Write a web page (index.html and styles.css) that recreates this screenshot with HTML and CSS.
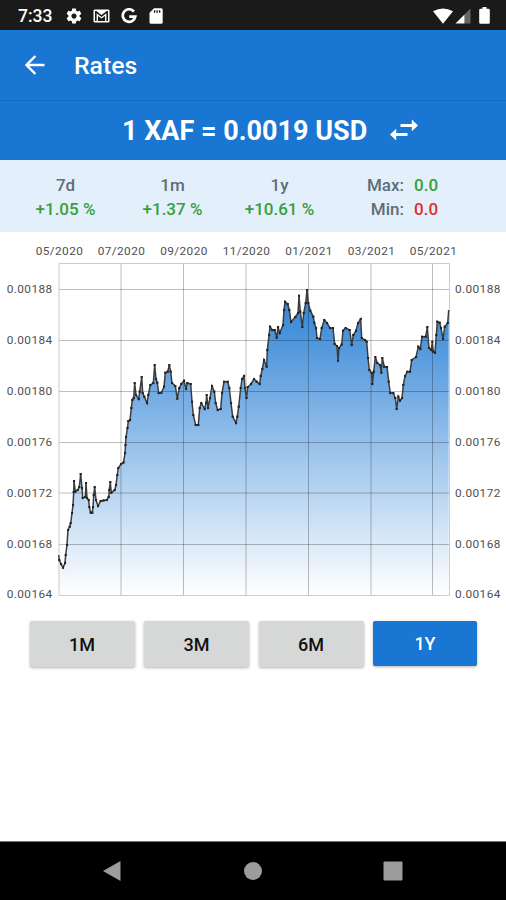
FILE: index.html
```html
<!DOCTYPE html>
<html lang="en">
<head>
<meta charset="UTF-8">
<meta name="viewport" content="width=device-width, initial-scale=1.0">
<title>Rates</title>
<link rel="stylesheet" href="styles.css">
</head>
<body>

  <!-- Status bar -->
  <div class="status-bar">
    <span class="clock">7:33</span>
    <svg class="icon-settings" width="18" height="18" viewBox="0 0 24 24"><path d="M19.43 12.98c.04-.32.07-.64.07-.98s-.03-.66-.07-.98l2.11-1.65c.19-.15.24-.42.12-.64l-2-3.46c-.12-.22-.39-.3-.61-.22l-2.49 1c-.52-.4-1.08-.73-1.69-.98l-.38-2.65C14.46 2.18 14.25 2 14 2h-4c-.25 0-.46.18-.49.42l-.38 2.65c-.61.25-1.17.59-1.69.98l-2.49-1c-.23-.09-.49 0-.61.22l-2 3.46c-.13.22-.07.49.12.64l2.11 1.65c-.04.32-.07.65-.07.98s.03.66.07.98l-2.11 1.65c-.19.15-.24.42-.12.64l2 3.46c.12.22.39.3.61.22l2.49-1c.52.4 1.08.73 1.69.98l.38 2.65c.03.24.24.42.49.42h4c.25 0 .46-.18.49-.42l.38-2.65c.61-.25 1.17-.59 1.69-.98l2.49 1c.23.09.49 0 .61-.22l2-3.46c.12-.22.07-.49-.12-.64l-2.11-1.65zM12 15.5c-1.93 0-3.5-1.57-3.5-3.5s1.57-3.5 3.5-3.5 3.5 1.57 3.5 3.5-1.57 3.5-3.5 3.5z"/></svg>
    <svg class="icon-mail" width="17" height="14" viewBox="0 0 17 14"><path fill-rule="evenodd" d="M1.8.5h13.400q1.300 0 1.300 1.300v10.400q0 1.300-1.300 1.300H1.800Q.5 13.500.5 12.200V1.800Q.5.5 1.800.5zM2 2v10h1.600V4.200l4.900 3.700 4.900-3.700V12H15V2h-1.300L8.500 6 3.300 2zM5 7v5h7V7L8.500 9.600z"/></svg>
    <svg class="icon-google" width="16" height="16" viewBox="0 0 16 16"><path d="M13 3.600A6.300 6.300 0 1 0 14.300 8.600H8.200" fill="none" stroke="#fff" stroke-width="2.700"/></svg>
    <svg class="icon-sd" width="14" height="16" viewBox="0 0 14 16"><path fill-rule="evenodd" d="M5 .3h7.200q1.500 0 1.500 1.500v12.400q0 1.500-1.500 1.500H2q-1.500 0-1.500-1.500V4.800zM4.900 2.300v2.500h1.400V2.300zm2.500 0v2.500h1.400V2.300zm2.500 0v2.500h1.400V2.300z"/></svg>
    <div class="status-right">
      <svg class="icon-wifi" width="20" height="16" viewBox="0 0 20 16"><path d="M0 3.200Q10-2.400 20 3.200L10 15.800z"/></svg>
      <svg class="icon-signal" width="16" height="16" viewBox="0 0 16 16"><path class="signal-off" d="M9.500 6.500 15.500.5v15h-6z"/><path d="M.5 15.500 9.500 6.500v9z"/></svg>
      <svg class="icon-battery" width="11" height="17" viewBox="0 0 11 17"><path d="M3.500 0h4v1.700h2q1.300 0 1.300 1.300v12.500q0 1.300-1.300 1.300h-8Q.2 16.800.2 15.500V3q0-1.300 1.300-1.300h2z"/></svg>
    </div>
  </div>

  <!-- App header -->
  <header class="toolbar">
    <svg class="back" width="20" height="20" viewBox="0 0 20 20"><path d="M19.500 10H1.800M10.400 1 1.500 10l8.900 9" fill="none" stroke="#fff" stroke-width="2.400"/></svg>
    <h1>Rates</h1>
  </header>

  <div class="rate-bar">
    <span class="rate">1 XAF = 0.0019 USD</span>
    <svg class="swap" width="28" height="22" viewBox="0 0 28 22"><path d="M10.500 4.900h11.300V.5L28 6.400l-6.200 5.900V7.900H10.500zM17.500 14.100H6.200V9.700L0 15.600l6.200 5.900v-4.400h11.300z"/></svg>
  </div>

  <!-- Changes for each period -->
  <div class="stats">
    <div class="stat"><div>7d</div><div class="up">+1.05 %</div></div>
    <div class="stat"><div>1m</div><div class="up">+1.37 %</div></div>
    <div class="stat"><div>1y</div><div class="up">+10.61 %</div></div>
    <div class="min-max">
      <span>Max:</span><span class="up">0.0</span>
      <span>Min:</span><span class="down">0.0</span>
    </div>
  </div>

  <!-- Rate history -->
  <svg class="chart" width="506" height="373" viewBox="0 232 506 373">
    <defs>
      <linearGradient id="fill" gradientUnits="userSpaceOnUse" x1="0" y1="264" x2="0" y2="595">
        <stop offset="0" stop-color="#1976d2"/>
        <stop offset="1" stop-color="#1976d2" stop-opacity="0"/>
      </linearGradient>
      <marker id="dot" markerUnits="userSpaceOnUse" markerWidth="3" markerHeight="3" refX="1.500" refY="1.500">
        <rect x="0.400" y="0.400" width="2.200" height="2.200" fill="#222"/>
      </marker>
      <polyline id="rates" points="58.700,555 59.300,560 61,564 63,567.700 65,563 65.700,555 67,545 68,530 69.700,526.700 70.700,523 72,513 73,505 73.700,492 74,481 75.300,491.700 77.700,490 79.300,487 80.700,474 82,488 82.700,498 85.300,497 86,483 87,498 88.700,500 89.300,507 90.700,512.700 92.300,512.700 93,507 93.700,495 94.700,487 96,500 98,506 100.700,501 103.500,500.500 106.700,500 108.700,497 109.300,490 110.300,482 111.300,492.700 114.700,490 116,485 117.300,475 118.300,468 121,464 123.500,462.500 125,453 125.500,445 126,437 127.500,428 128.300,421 130,420 131.300,408 132.300,400 133.700,398 134.700,383 136,395 138.700,399 139.700,391.700 141.700,377 142.700,393 144.300,396.700 147,403 148.300,395 150.300,385 153.300,383 154.700,365 156,379 157.300,382.700 158.700,393 161.300,392.700 164,386.700 165.300,372.700 167.700,371.700 169.300,365 170.700,371.700 172,383 175.300,386 177.300,398.700 179.300,388 181.300,384 184,380.700 186,389 187.300,383 190.700,384 192,401.700 193.300,415 195.700,425 198.300,425 199.700,408 201.300,403 204.700,409 206,403 206.700,395 208,408 210,398 212,386 214.300,391.700 215.700,403 217.700,410 220.700,409 222,393 224,381.700 227.700,381.700 229.300,388 231,403 232.700,416.700 236,423 237.300,416.700 238.700,406.700 240.700,388 242,379 244,376 245,388 246.500,398 247.700,387 251,384 254,379 256.700,381.700 259.700,384 260.700,376 262.300,369 264,360 266.700,366.700 267.300,350 269,335 270,326.700 272.300,330 274.700,330 276.700,337.700 278,327 279.700,333 283,325 284,310 285,301.700 287.700,304 289.300,310 291,322 295.300,317 298,313 299,295.700 300.300,311.700 302.300,327 303.700,313 305.700,303 307,290 308.300,303 310.300,310.700 313.300,316.700 314.300,322.700 316,328 317,338 320,339 321.700,328 324.300,320 327,323 330,328 333,328 334.700,344 337,346 338,360.700 339,348 341.700,344.500 343,330.700 345.700,328 349.700,330 351.700,345 353.300,335 356,330.700 358,323 360.700,319 361.700,338 365,340 366.700,341.700 368,358 369.300,370 371.700,373 372.300,384 373.700,371.700 375.300,357 377.300,363 380,365 381.300,372.700 382.300,358 384.300,366.700 387,367 388.700,381.700 390.300,393 393.300,393 395.300,398 396.700,409 398.300,396.700 400,400.700 402,398 403.300,385 405,376 407.300,371.700 410,371.700 411.700,360 416,357 418.300,346.700 420.300,349 422,336.700 425.700,336.700 427.300,327 429,348 431.300,350 432.300,341.700 433.300,351.700 435,352.700 436.300,335 437.300,321.700 439.700,322.700 441,328 443,339 444.700,326.700 447.700,323 448.700,310"/>
    </defs>

    <g class="axis-date">
      <text x="59.500" y="255">05/2020</text>
      <text x="121.500" y="255">07/2020</text>
      <text x="184" y="255">09/2020</text>
      <text x="246.500" y="255">11/2020</text>
      <text x="309" y="255">01/2021</text>
      <text x="371.500" y="255">03/2021</text>
      <text x="433.500" y="255">05/2021</text>
    </g>
    <g class="axis-left">
      <text x="52.500" y="293">0.00188</text>
      <text x="52.500" y="344">0.00184</text>
      <text x="52.500" y="395">0.00180</text>
      <text x="52.500" y="446">0.00176</text>
      <text x="52.500" y="496.500">0.00172</text>
      <text x="52.500" y="547.500">0.00168</text>
      <text x="52.500" y="598">0.00164</text>
    </g>
    <g class="axis-right">
      <text x="455" y="293">0.00188</text>
      <text x="455" y="344">0.00184</text>
      <text x="455" y="395">0.00180</text>
      <text x="455" y="446">0.00176</text>
      <text x="455" y="496.500">0.00172</text>
      <text x="455" y="547.500">0.00168</text>
      <text x="455" y="598">0.00164</text>
    </g>

    <path class="area" fill="url(#fill)" d=""/>
    <path class="grid" d="M121 264v331M183.500 264v331M246 264v331M308.500 264v331M371 264v331M432.500 264v331M59 289.500h390M59 340.500h390M59 391.500h390M59 442.500h390M59 493h390M59 544.500h390"/>
    <path class="frame" d="M59 263.500h390.500v332H59z"/>
    <use href="#rates" class="line"/>
  </svg>

  <!-- Period buttons -->
  <div class="periods">
    <button>1M</button>
    <button>3M</button>
    <button>6M</button>
    <button class="active">1Y</button>
  </div>

  <!-- System navigation -->
  <nav class="nav-bar">
    <svg width="20" height="22" viewBox="0 0 20 22"><path d="M18.500 1v20L1 11z"/></svg>
    <svg width="20" height="22" viewBox="0 0 20 22"><circle cx="10" cy="11" r="9"/></svg>
    <svg width="20" height="22" viewBox="0 0 20 22"><rect x="0.500" y="1.500" width="19" height="19" rx="1"/></svg>
  </nav>

<script>
  // Close the rate line down to the bottom axis to get the filled area
  const points = document.getElementById('rates').getAttribute('points');
  document.querySelector('.area').setAttribute('d', 'M58.7 595L' + points + ' 448.7 595z');
</script>

</body>
</html>
```
FILE: styles.css
```css
* {
  box-sizing: border-box;
}

body {
  margin: 0;
  width: 506px;
  height: 900px;
  display: flex;
  flex-direction: column;
  background: #fff;
  font-family: Roboto, sans-serif;
  overflow: hidden;
}

svg {
  display: block;
  fill: #fff;
  flex: none;
}

.status-bar {
  height: 30px;
  display: flex;
  align-items: center;
  padding: 1px 16px 0 18px;
  background: #1a1a1a;
  color: #fff;
}

.clock {
  width: 47px;
  font-size: 17.5px;
  font-weight: 500;
}

.icon-mail {
  margin-left: 10px;
}

.icon-google {
  margin-left: 11px;
}

.icon-sd {
  margin-left: 12px;
}

.status-right {
  margin-left: auto;
  display: flex;
  align-items: center;
}

.icon-signal {
  margin: 0 8px 0 2px;
}

.signal-off {
  fill: #666;
}

.toolbar {
  height: 70px;
  display: flex;
  align-items: center;
  padding-left: 25px;
  background: #1976d2;
  color: #fff;
}

.toolbar h1 {
  margin: 0 0 0 29px;
  font-size: 24.8px;
  font-weight: 500;
}

.rate-bar {
  height: 60px;
  display: flex;
  align-items: center;
  padding-left: 122px;
  background: #1976d2;
  border-top: 1px solid #166bc3;
  color: #fff;
}

.rate {
  width: 268px;
  font-size: 27px;
  font-weight: 700;
  white-space: nowrap;
}

.swap {
  margin-top: -2px;
}

.stats {
  height: 72px;
  display: grid;
  grid-template-columns: 107px 107px 107px auto;
  padding: 13px 0 0 12px;
  background: #e3f0fb;
  color: #606d78;
  font-size: 17px;
  font-weight: 500;
  line-height: 24px;
}

.stat {
  text-align: center;
}

.min-max {
  display: grid;
  grid-template-columns: 71px auto;
  column-gap: 10px;
  align-content: start;
  justify-content: start;
}

.min-max span:nth-child(odd) {
  text-align: right;
}

.up {
  color: #36a03a;
}

.down {
  color: #e02f2f;
}

/* Chart */
.axis-date,
.axis-left,
.axis-right {
  fill: #505050;
  font-size: 11.8px;
  letter-spacing: 0.4px;
}

.axis-date {
  text-anchor: middle;
}

.axis-left {
  text-anchor: end;
}

.grid {
  fill: none;
  stroke: #000;
  stroke-opacity: 0.26;
}

.frame {
  fill: none;
  stroke: #ccc;
}

.line {
  fill: none;
  stroke: #3c3c3c;
  stroke-width: 1.5;
  marker-mid: url(#dot);
}

.periods {
  display: grid;
  grid-template-columns: 105px 105px 105px 104px;
  column-gap: 9.5px;
  padding: 16px 0 0 29.5px;
}

.periods button {
  height: 46px;
  padding: 0;
  border: 0;
  border-radius: 2px;
  background: #d6d7d7;
  box-shadow: 0 1px 3px rgba(0, 0, 0, 0.3);
  color: #111;
  font-family: inherit;
  font-size: 18px;
  font-weight: 500;
}

.periods .active {
  height: 45px;
  background: #1976d2;
  color: #fff;
}

.nav-bar {
  height: 59px;
  margin-top: auto;
  display: flex;
  align-items: center;
  justify-content: space-between;
  padding: 0 103px 0 102px;
  background: #000;
  border-top: 1px solid #777;
}

.nav-bar svg {
  fill: #9c9c9c;
}
```
